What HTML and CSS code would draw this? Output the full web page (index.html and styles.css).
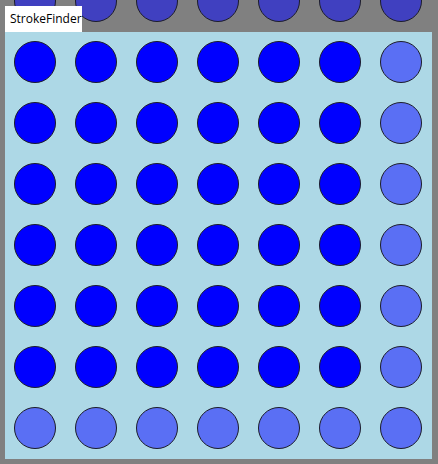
FILE: index.html
```html
<!DOCTYPE html>
<html>
<head>
<meta charset="utf-8">
<link rel="stylesheet" href="styles.css">
</head>
<body>
<div class="backdrop">
  <span class="dot dim"></span><span class="dot dim"></span><span class="dot dim"></span><span class="dot dim"></span><span class="dot dim"></span><span class="dot dim"></span><span class="dot dim"></span>
</div>
<div class="tab">StrokeFinder</div>
<div class="panel">
  <div class="grid">
    <span class="dot"></span><span class="dot"></span><span class="dot"></span><span class="dot"></span><span class="dot"></span><span class="dot"></span><span class="dot light"></span>
    <span class="dot"></span><span class="dot"></span><span class="dot"></span><span class="dot"></span><span class="dot"></span><span class="dot"></span><span class="dot light"></span>
    <span class="dot"></span><span class="dot"></span><span class="dot"></span><span class="dot"></span><span class="dot"></span><span class="dot"></span><span class="dot light"></span>
    <span class="dot"></span><span class="dot"></span><span class="dot"></span><span class="dot"></span><span class="dot"></span><span class="dot"></span><span class="dot light"></span>
    <span class="dot"></span><span class="dot"></span><span class="dot"></span><span class="dot"></span><span class="dot"></span><span class="dot"></span><span class="dot light"></span>
    <span class="dot"></span><span class="dot"></span><span class="dot"></span><span class="dot"></span><span class="dot"></span><span class="dot"></span><span class="dot light"></span>
    <span class="dot light"></span><span class="dot light"></span><span class="dot light"></span><span class="dot light"></span><span class="dot light"></span><span class="dot light"></span><span class="dot light"></span>
  </div>
</div>
</body>
</html>
```
FILE: styles.css
```css
html, body {
  margin: 0;
  padding: 0;
  background: #808080;
  width: 438px;
  height: 464px;
  overflow: hidden;
  position: relative;
  font-family: "Open Sans", "Noto Sans", sans-serif;
}
.backdrop {
  display: flex;
  gap: 19px;
  padding-left: 14px;
  margin-top: -20px;
  height: 42px;
}
.dot {
  display: block;
  width: 42px;
  height: 42px;
  box-sizing: border-box;
  border-radius: 50%;
  border: 1px solid #1c1c2a;
  background: #0000ff;
}
.dot.dim {
  background: #4040c0;
}
.dot.light {
  background: #5a6ff4;
}
.tab {
  position: absolute;
  left: 5px;
  top: 6px;
  width: 77px;
  height: 26px;
  box-sizing: border-box;
  background: #ffffff;
  color: #000000;
  font-size: 12px;
  line-height: 26px;
  padding-left: 5px;
}
.panel {
  margin-top: 10px;
  margin-left: 5px;
  width: 427px;
  height: 427px;
  box-sizing: border-box;
  background: #add8e6;
  padding: 9px 0 0 9px;
}
.grid {
  display: grid;
  grid-template-columns: repeat(7, 42px);
  grid-auto-rows: 42px;
  gap: 19px;
}
```
